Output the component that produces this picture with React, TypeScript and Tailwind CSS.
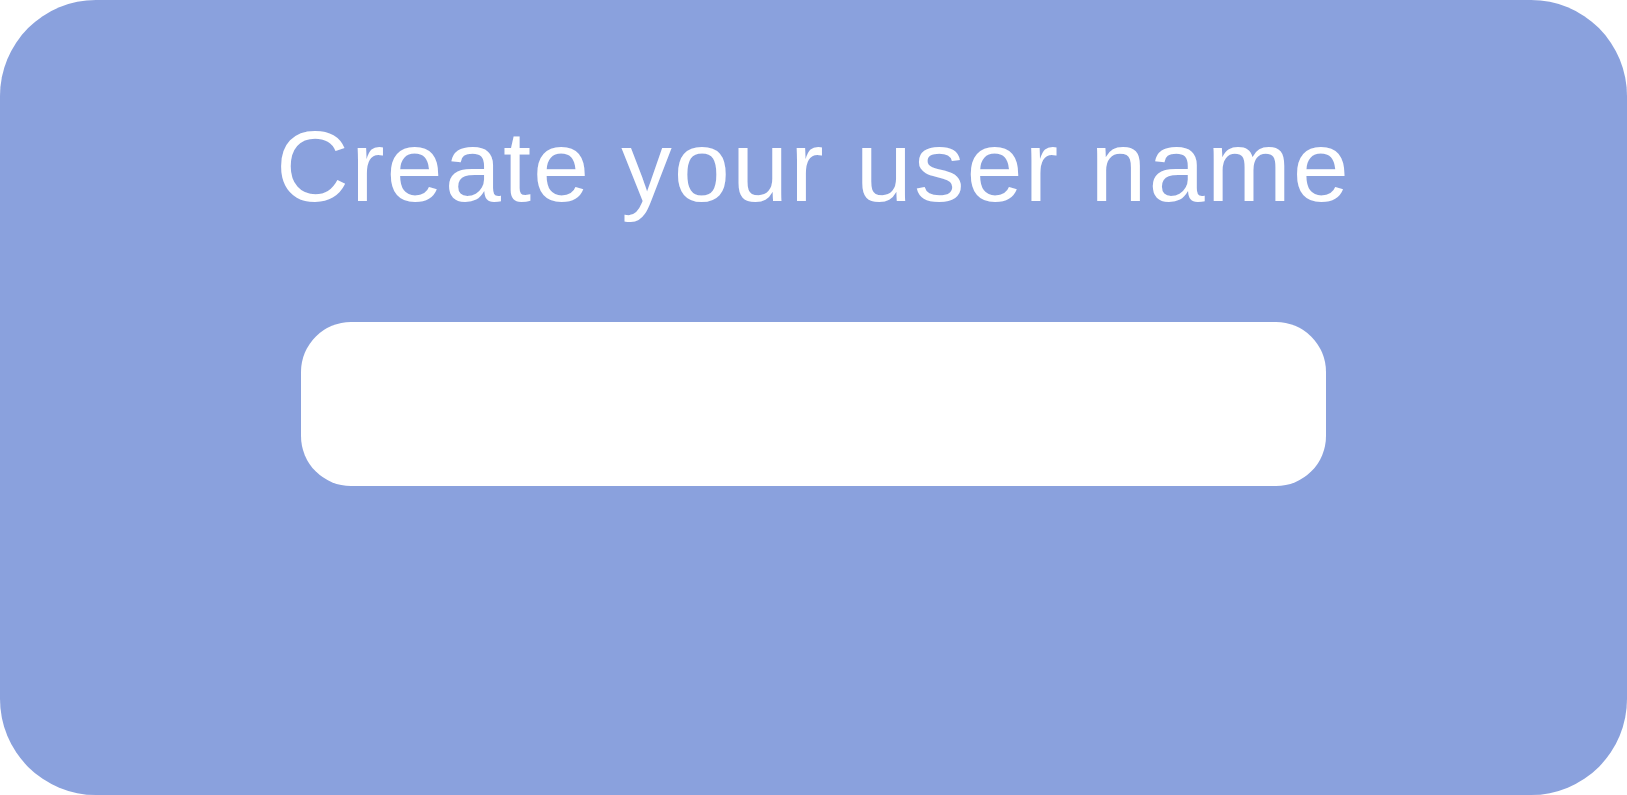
export default function App() {
  return (
    <div className="h-[795px] w-full bg-white">
      <div className="flex h-full w-full flex-col items-center rounded-[96px] bg-[#8aa1dd] pt-[116px]">
        <h1 className="font-['Liberation_Sans',Arial,sans-serif] text-[101px] font-normal leading-none tracking-[2px] text-white">
          Create your user name
        </h1>
        <input
          type="text"
          aria-label="User name"
          className="mt-[105px] h-[164px] w-[1025px] rounded-[50px] border-0 bg-white px-12 font-['Liberation_Sans',Arial,sans-serif] text-5xl text-gray-800 outline-none"
        />
      </div>
    </div>
  )
}
